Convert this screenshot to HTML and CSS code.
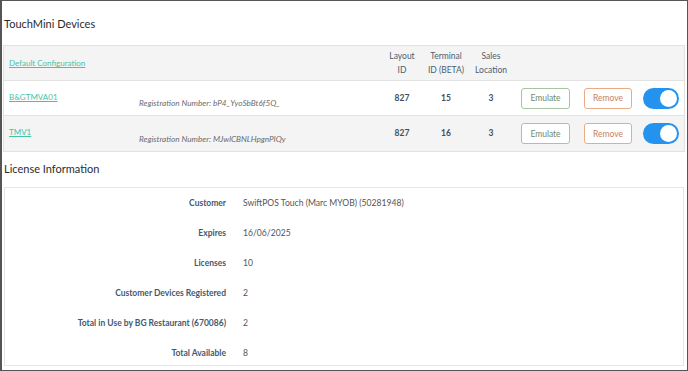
FILE: index.html
```html
<!DOCTYPE html>
<html lang="en">
<head>
    <meta charset="UTF-8">
    <title>TouchMini Devices</title>
    <link rel="stylesheet" href="styles.css">
</head>
<body>
    <div class="frame">
        <h2 class="page-title">TouchMini Devices</h2>

        <!-- devices table -->
        <div class="devices">
            <div class="device-row head">
                <div class="cell name"><a href="#">Default Configuration</a></div>
                <div class="cell reg"></div>
                <div class="cell num">Layout<br>ID</div>
                <div class="cell num">Terminal<br>ID (BETA)</div>
                <div class="cell num">Sales<br>Location</div>
                <div class="cell"></div>
                <div class="cell"></div>
                <div class="cell"></div>
            </div>
            <div class="device-row">
                <div class="cell name"><a href="#">B&amp;GTMVA01</a></div>
                <div class="cell reg">Registration Number: bP4_YyoSbBt6f5Q_</div>
                <div class="cell num val">827</div>
                <div class="cell num val">15</div>
                <div class="cell num val">3</div>
                <div class="cell btn-cell"><button class="btn btn-emulate">Emulate</button></div>
                <div class="cell btn-cell"><button class="btn btn-remove">Remove</button></div>
                <div class="cell btn-cell"><span class="toggle on"><span class="knob"></span></span></div>
            </div>
            <div class="device-row alt">
                <div class="cell name"><a href="#">TMV1</a></div>
                <div class="cell reg">Registration Number: MJwlCBNLHpgnPIQy</div>
                <div class="cell num val">827</div>
                <div class="cell num val">16</div>
                <div class="cell num val">3</div>
                <div class="cell btn-cell"><button class="btn btn-emulate">Emulate</button></div>
                <div class="cell btn-cell"><button class="btn btn-remove">Remove</button></div>
                <div class="cell btn-cell"><span class="toggle on"><span class="knob"></span></span></div>
            </div>
        </div>

        <h2 class="page-title license-title">License Information</h2>

        <!-- license details -->
        <div class="license">
            <div class="lic-row"><div class="lic-label">Customer</div><div class="lic-value">SwiftPOS Touch (Marc MYOB) (50281948)</div></div>
            <div class="lic-row"><div class="lic-label">Expires</div><div class="lic-value">16/06/2025</div></div>
            <div class="lic-row"><div class="lic-label">Licenses</div><div class="lic-value">10</div></div>
            <div class="lic-row"><div class="lic-label">Customer Devices Registered</div><div class="lic-value">2</div></div>
            <div class="lic-row"><div class="lic-label">Total in Use by BG Restaurant (670086)</div><div class="lic-value">2</div></div>
            <div class="lic-row"><div class="lic-label">Total Available</div><div class="lic-value">8</div></div>
        </div>
    </div>
</body>
</html>
```

FILE: styles.css
```css
* {
    box-sizing: border-box;
    margin: 0;
    padding: 0;
}

body {
    font-family: Lato, "Open Sans", sans-serif;
    background-color: #fff;
    color: #333;
}

.frame {
    width: 688px;
    height: 371px;
    border: 1px solid #555;
    border-left-width: 2px;
    padding: 0 2px 0 1px;
    overflow: hidden;
}

.page-title {
    font-size: 11px;
    font-weight: 400;
    color: #2b2b2b;
    padding: 16px 0 0 1px;
    height: 44px;
}

.license-title {
    padding-top: 10px;
    height: 35px;
}

.devices {
    border: 1px solid #e2e2e2;
}

.device-row {
    display: grid;
    grid-template-columns: 131px 245px 44px 44px 46px 64px 59px 47px;
    height: 35px;
    border-bottom: 1px solid #e2e2e2;
    background-color: #fff;
}

.device-row:last-child {
    border-bottom: none;
}

.device-row.head,
.device-row.alt {
    background-color: #f4f4f4;
}

.cell {
    font-size: 8.5px;
    display: flex;
    align-items: center;
}

.name {
    padding-left: 5px;
    padding-bottom: 3px;
}

.head .name {
    padding-bottom: 0;
}

.name a {
    color: #45c3a4;
    text-decoration: underline;
    font-size: 8px;
}

.reg {
    font-style: italic;
    color: #6b6b6b;
    font-size: 8.2px;
    align-items: flex-end;
    padding: 0 0 7px 4px;
}

.num {
    justify-content: center;
    text-align: center;
    color: #4b5f72;
    line-height: 14px;
}

.val {
    font-weight: 700;
    color: #40505f;
    padding-bottom: 1px;
}

.btn-cell {
    padding-left: 6px;
}

.btn {
    font-family: inherit;
    font-size: 8.5px;
    height: 21px;
    border-radius: 3px;
    background-color: #fff;
    border: 1px solid;
}

.btn-emulate {
    width: 49px;
    color: #6f8a6c;
    border-color: #a8c4a2;
    margin-left: 1px;
}

.btn-remove {
    width: 48px;
    color: #c9825b;
    border-color: #eaaa86;
}

.toggle {
    display: flex;
    align-items: center;
    justify-content: flex-end;
    width: 36px;
    height: 21px;
    border-radius: 11px;
    background-color: #2393ef;
    padding: 2px;
}

.knob {
    width: 17px;
    height: 17px;
    border-radius: 50%;
    background-color: #fff;
}

.license {
    margin: 0 1px;
    border: 1px solid #e6e6e6;
    height: 179px;
}

.lic-row {
    display: grid;
    grid-template-columns: 221px 1fr;
    column-gap: 17px;
    height: 30px;
    align-items: center;
    font-size: 8.5px;
}

.lic-label {
    text-align: right;
    color: #3f5a70;
    font-weight: 700;
}

.lic-value {
    color: #555;
    font-size: 8.6px;
}
```
